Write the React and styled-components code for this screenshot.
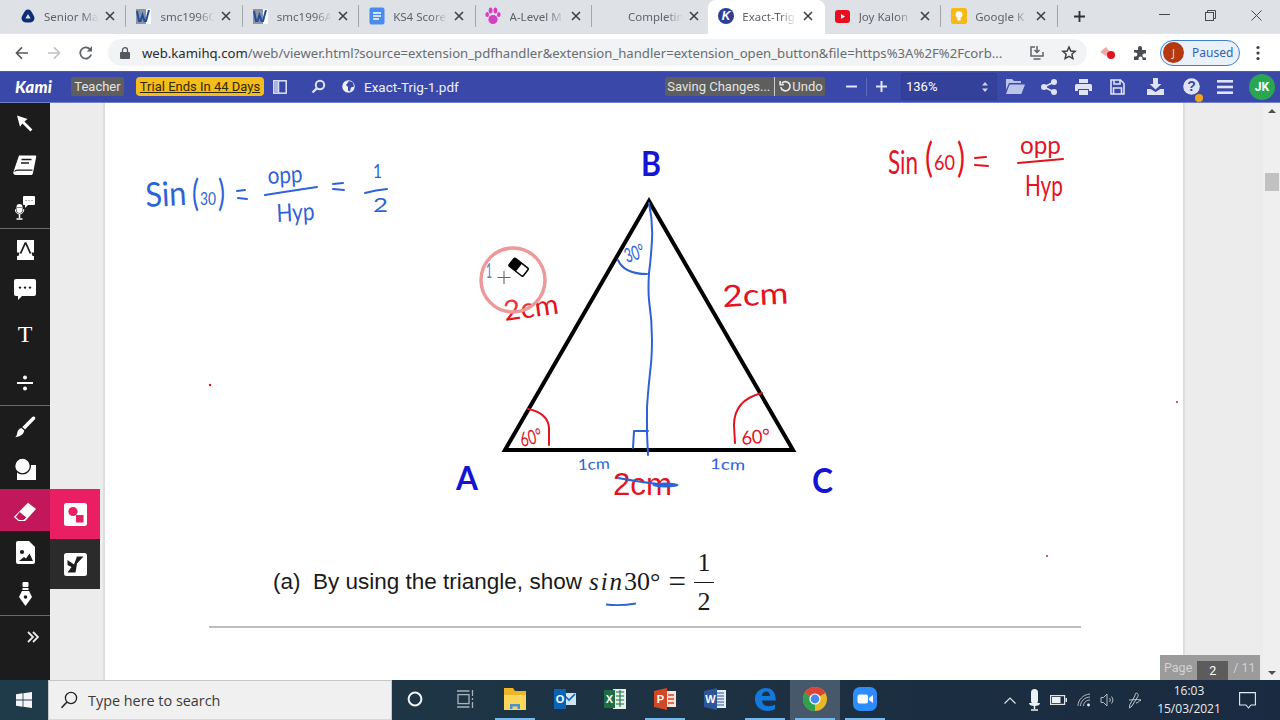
import React from "react";
import styled, { createGlobalStyle } from "styled-components";

const Global = createGlobalStyle`
  html, body { margin: 0; padding: 0; width: 1280px; height: 720px; overflow: hidden; background: #fff; }
  * { box-sizing: border-box; }
  svg { display: block; }
`;

const Screen = styled.div`
  width: 1280px; height: 720px; display: flex; flex-direction: column; overflow: hidden;
  font-family: "Noto Sans", "Open Sans", sans-serif;
`;

/* ---------- tab strip ---------- */
const TabStrip = styled.div`
  height: 34px; flex: none; display: flex; align-items: stretch; background: #dee1e6; padding-left: 10px;
`;
const Tab = styled.div`
  position: relative; width: 116.4px; display: flex; align-items: center; padding-bottom: 2px;
  background: ${p => (p.$active ? "#fff" : "transparent")};
  border-radius: ${p => (p.$active ? "8px 8px 0 0" : "0")};
`;
const TabSep = styled.span`
  width: 1px; height: 22px; background: #a3a6aa; flex: none; margin-left: -1px; align-self: center; margin-bottom: 2px;
`;
const TabIconSlot = styled.span`
  width: ${p => p.$w || 34}px; flex: none; display: flex; justify-content: center; padding-left: 1px;
`;
const TabTitle = styled.span`
  width: 57px; flex: none; font-size: 11.5px; color: #5f6368; white-space: nowrap; overflow: hidden;
  -webkit-mask-image: linear-gradient(90deg, #000 66%, transparent 96%);
  mask-image: linear-gradient(90deg, #000 66%, transparent 96%);
`;
const TabClose = styled.span`
  width: 12px; margin-left: 3px; flex: none; display: flex; justify-content: center;
`;
const NewTab = styled.span`
  width: 46px; display: flex; align-items: center; justify-content: center; padding-bottom: 2px; margin-left: -1px;
`;
const WindowControls = styled.div`
  margin-left: auto; display: flex; align-items: flex-start; padding-top: 4px; padding-right: 1px;
`;
const WinBtn = styled.span`
  width: 46px; height: 22px; display: flex; align-items: center; justify-content: center;
`;

/* ---------- address bar ---------- */
const AddressBar = styled.div`
  height: 37px; flex: none; background: #fff; display: flex; align-items: center; padding-left: 6px;
`;
const NavSlot = styled.span`
  width: ${p => p.$w || 32}px; height: 26px; flex: none; display: flex; align-items: center; justify-content: center;
`;
const Omnibox = styled.div`
  margin-left: 6px; width: 979px; height: 27px; border-radius: 14px; background: #f1f3f4;
  display: flex; align-items: center; padding-left: 9px; padding-right: 2px;
`;
const Url = styled.div`
  margin-left: 9px; width: 870px; font-size: 13.15px; color: #6a6d71; white-space: nowrap; overflow: hidden;
  b { font-weight: 400; color: #2a2c2e; }
`;
const OmniEnd = styled.div`
  margin-left: auto; display: flex;
`;
const ProfilePill = styled.div`
  margin-left: 7px; width: 80px; height: 26px; border-radius: 13px; border: 1px solid #3f7fd0; background: #eaf1fb;
  display: flex; align-items: center; padding-left: 2px; font-size: 12px; color: #2f62b0;
`;
const Avatar = styled.span`
  width: 21px; height: 21px; border-radius: 50%; background: #b5390e; color: #f3d4c8; font-size: 11px;
  display: flex; align-items: center; justify-content: center; margin-right: 8px;
`;

/* ---------- Kami bar ---------- */
const KamiBar = styled.div`
  height: 32px; flex: none; background: #3a49a9; border-top: 1px solid #4a58b4; border-bottom: 1px solid #7280c8;
  display: flex; align-items: center; padding: 0 5px 1px 15px; color: #fff;
`;
const KamiLogo = styled.span`
  width: 41px; font-family: "Lato", sans-serif; font-weight: 900; font-style: italic; font-size: 16.5px; letter-spacing: 0.2px;
`;
const GreyChip = styled.span`
  height: 19px; margin-left: ${p => p.$ml || 0}px; width: ${p => p.$w}px; flex: none; background: #5e5e5e; border-radius: 2px;
  display: flex; align-items: center; justify-content: center; font-size: 13px; color: #e4e4e4; white-space: nowrap;
  font-family: "Roboto", sans-serif;
`;
const TrialChip = styled.span`
  height: 19px; width: 128px; margin-left: 12px; flex: none; background: #f4bd1b; border-radius: 4px; color: #332900;
  display: flex; align-items: center; justify-content: center; font-size: 13px; text-decoration: underline; white-space: nowrap;
  font-family: "Roboto", sans-serif;
`;
const BarSlot = styled.span`
  width: ${p => p.$w}px; margin-left: ${p => p.$ml || 0}px; flex: none; display: flex; align-items: center; justify-content: center; position: relative;
`;
const FileName = styled.span`
  margin-left: 8px; font-size: 13.5px; font-family: "Roboto", sans-serif; color: #eef0fa;
`;
const BarRight = styled.div`
  margin-left: auto; display: flex; align-items: center;
`;
const ChipDivider = styled.span`
  width: 1px; height: 19px; background: #ccc; margin: 0 4px 0 4px;
`;
const BarDivider = styled.span`
  width: 1px; height: 18px; background: #5f6cbc; flex: none; margin: 0 1px;
`;
const ZoomSelect = styled.div`
  width: 96px; height: 27px; margin-left: 7px; background: #33419b; border: 1px solid #2f3c92; border-radius: 2px;
  display: flex; align-items: center; justify-content: space-between; padding: 0 8px 0 4px;
  font-size: 13px; font-family: "Roboto", sans-serif; color: #fff;
`;
const OrangeDot = styled.span`
  position: absolute; right: 2px; bottom: -7px; width: 8px; height: 8px; border-radius: 50%; background: #f7a21b;
`;
const UserBadge = styled.span`
  width: 26px; height: 26px; margin-left: 4px; border-radius: 50%; background: #2aa651; color: #fff; font-size: 12px; font-weight: 700;
  display: flex; align-items: center; justify-content: center; font-family: "Roboto", sans-serif;
`;

/* ---------- workspace ---------- */
const Workspace = styled.div`
  flex: 1; min-height: 0; display: flex; position: relative;
`;
const Sidebar = styled.nav`
  width: 50px; flex: none; background: #1c1c1c; display: flex; flex-direction: column;
`;
const SideBtn = styled.div`
  height: ${p => p.$h || 42}px; flex: none; display: flex; align-items: center; justify-content: center;
  background: ${p => (p.$active ? "#c2175b" : "transparent")};
  padding-left: ${p => p.$pl || 0}px;
  padding-top: ${p => p.$pt || 0}px;
`;
const SideRule = styled.div`
  height: 1px; flex: none; background: #6a6a6a;
`;
const Flyout = styled.div`
  position: absolute; left: 50px; top: 386px; width: 50px; display: flex; flex-direction: column;
`;
const FlyoutBtn = styled.div`
  height: 50px; display: flex; align-items: center; justify-content: center;
  background: ${p => (p.$active ? "#e91e63" : "#2b2b2b")};
`;
const Gutter = styled.div`
  width: ${p => p.$w}px; flex: none; background: #ececec;
  border-${p => p.$side}: 2px solid #dedede;
`;
const Scrollbar = styled.div`
  width: 17px; flex: none; background: #efefef; display: flex; flex-direction: column; align-items: center;
`;
const ScrollArrowUp = styled.div`
  margin-top: 6px; width: 0; height: 0;
  border-left: 4px solid transparent; border-right: 4px solid transparent; border-bottom: 4px solid #505050;
`;
const ScrollThumb = styled.div`
  width: 14px; height: 18px; background: #c1c1c1; margin-top: 60px;
`;
const ScrollArrow = styled.div`
  margin-top: auto; margin-bottom: 5px; width: 0; height: 0;
  border-left: 4px solid transparent; border-right: 4px solid transparent; border-top: 4px solid #505050;
`;
const Page = styled.main`
  width: 1078px; flex: none; background: #fff; display: flex; flex-direction: column; overflow: hidden;
`;
const Figure = styled.svg`
  width: 1078px; height: 437px; flex: none;
`;
const Question = styled.div`
  height: 86px; flex: none; padding: 0 0 3px 168px; display: flex; align-items: center; color: #1a1a1a; position: relative;
`;
const Prompt = styled.span`
  font-family: "Liberation Sans", Arial, sans-serif; font-size: 22.5px; white-space: pre;
`;
const MathVar = styled.span`
  font-family: "Liberation Serif", serif; font-style: italic; font-size: 25px; letter-spacing: 2px; margin-left: 7px;
`;
const MathNum = styled.span`
  font-family: "Liberation Serif", serif; font-size: 26px; white-space: pre;
`;
const MathEq = styled.span`
  font-family: "Liberation Serif", serif; font-size: 31px; margin-left: 8px; line-height: 1;
`;
const Fraction = styled.span`
  display: inline-flex; flex-direction: column; align-items: center; margin-left: 8px; width: 20px;
  font-family: "Liberation Serif", serif; font-size: 26px; line-height: 31px;
`;
const FractionTop = styled.span`
  border-bottom: 1.5px solid #1a1a1a; width: 100%; text-align: center; padding-bottom: 4px;
`;
const FractionBottom = styled.span`
  padding-top: 3px;
`;
const InkUnderline = styled.svg`
  position: absolute; left: 500px; top: 61px;
`;
const StrayDot = styled.span`
  position: absolute; left: 941px; top: 15px; width: 2px; height: 2px; border-radius: 50%; background: #e3131f;
`;
const PageRule = styled.hr`
  margin: 0 0 0 104px; width: 872px; height: 2px; flex: none; border: none; background: #bdbdbd;
`;
const PageBadge = styled.div`
  position: absolute; left: 1160px; top: 552px; width: 100px; height: 25px; background: #9b9b9b;
  display: flex; align-items: center; padding-left: 4px; font-family: "Roboto", sans-serif; font-size: 12.5px; color: #d2d2d2;
`;
const PageInput = styled.span`
  width: 31px; height: 19px; margin: 0 5px 0 5px; align-self: flex-end; background: #5c5c5c; color: #fff; display: flex; align-items: center; justify-content: center;
`;

/* ---------- taskbar ---------- */
const Taskbar = styled.footer`
  height: 40px; flex: none; display: flex; align-items: stretch; padding-right: 10px;
  background: linear-gradient(90deg, #1f3b4a 0%, #1d3343 45%, #1a2a40 100%);
`;
const StartBtn = styled.div`
  width: 48px; flex: none; display: flex; align-items: center; justify-content: center;
`;
const SearchBox = styled.div`
  width: 344px; flex: none; background: #f0f0f0; border: 1px solid #c8c8c8; border-bottom-color: #d8d8d8;
  display: flex; align-items: center; padding-left: 11px; font-size: 15px; color: #333; margin-right: -2px;
`;
const SearchText = styled.span`
  margin-left: 10px; font-family: "Open Sans", sans-serif; font-size: 14.4px; color: #3a3a3a;
`;
const TaskSlot = styled.div`
  width: 50px; flex: none; position: relative; display: flex; align-items: center; justify-content: center;
  padding-bottom: 2px;
  background: ${p => (p.$focus ? "#46586a" : "transparent")};
  &::after {
    content: ""; position: absolute; left: 5px; right: 5px; bottom: 0; height: 2px;
    background: ${p => (p.$on ? "#76b9ed" : "transparent")};
  }
`;
const TraySlot = styled.div`
  width: ${p => p.$w}px; flex: none; display: flex; align-items: center; justify-content: center;
`;
const Clock = styled.div`
  width: 70px; flex: none; display: flex; flex-direction: column; align-items: center; justify-content: center; gap: 2px;
  font-family: "Open Sans", sans-serif; font-size: 12px; line-height: 16px; color: #e8ecef;
`;

/* ---------- icons ---------- */
const Svg = ({ s = 16, h, vb, children, ...r }) => (
  <svg width={s} height={h || s} viewBox={vb || "0 0 24 24"} {...r}>{children}</svg>
);
const CloseX = ({ c = "#3c4043" }) => (
  <Svg s={10} vb="0 0 10 10"><path d="M1 1l8 8M9 1l-8 8" stroke={c} strokeWidth="1.6" /></Svg>
);
const DriveIcon = () => (
  <Svg s={14} vb="0 0 14 14"><path d="M7 .5C9.5.5 10 2 11 3.6l2 3.6c.7 1.4.6 3-.4 4.6-1 1.3-2 1.7-3.6 1.7H5c-1.6 0-2.7-.4-3.6-1.7-1-1.6-1.1-3.2-.4-4.6l2-3.6C4 2 4.5.5 7 .5z" fill="#0d2f7a"/><path d="M7 5l2.6 4.6H4.4z" fill="#dee1e6"/></Svg>
);
const WordIcon = () => (
  <Svg s={17} vb="0 0 17 17"><rect x="1" y="1" width="12" height="15" fill="#8b93a6"/><rect x="11" y="1" width="5" height="15" fill="#fff"/><path d="M2 3l2 10h1.5L7.5 7l2 6H11l3-11" fill="none" stroke="#1f4e9a" strokeWidth="2"/></Svg>
);
const DocsIcon = () => (
  <Svg s={16} h={18} vb="0 0 16 18"><rect x=".5" y=".5" width="15" height="17" rx="2" fill="#4a8bf0"/><path d="M4 6h8M4 9h8M4 12h6" stroke="#fff" strokeWidth="1.5"/></Svg>
);
const PawIcon = () => (
  <Svg s={16} h={18} vb="0 0 16 18" fill="#d63fc0"><ellipse cx="8" cy="12.5" rx="4.6" ry="4.5"/><ellipse cx="2.2" cy="7.5" rx="1.8" ry="2.6"/><ellipse cx="13.8" cy="7.5" rx="1.8" ry="2.6"/><ellipse cx="5.6" cy="3.6" rx="1.9" ry="3"/><ellipse cx="10.4" cy="3.6" rx="1.9" ry="3"/></Svg>
);
const KamiTab = () => (
  <Svg s={16} vb="0 0 16 16"><circle cx="8" cy="8" r="8" fill="#2e3d96"/><text x="8" y="12.2" textAnchor="middle" fontSize="12" fontWeight="700" fontStyle="italic" fill="#fff" fontFamily="Liberation Sans">K</text></Svg>
);
const YouTube = () => (
  <Svg s={15} h={13} vb="0 0 15 13"><rect width="15" height="13" rx="3" fill="#e5101f"/><path d="M6 4l4 2.5L6 9z" fill="#fff"/></Svg>
);
const KeepIcon = () => (
  <Svg s={16} vb="0 0 16 16"><rect width="16" height="16" rx="2" fill="#f7ba15"/><circle cx="8" cy="6.6" r="3.4" fill="#fff"/><rect x="6.3" y="10" width="3.4" height="2.6" fill="#fff"/></Svg>
);

const ArrowBack = () => (
  <Svg s={16} vb="0 0 16 16"><path d="M14 8H2.5M8 2.4L2.4 8 8 13.6" fill="none" stroke="#55585c" strokeWidth="1.6" /></Svg>
);
const ArrowForward = () => (
  <Svg s={16} vb="0 0 16 16"><path d="M2 8h11.500M8 2.400L13.600 8 8 13.600" fill="none" stroke="#c0c3c6" strokeWidth="1.6" /></Svg>
);
const Reload = () => (
  <Svg s={16} vb="0 0 16 16"><path d="M13.2 9.6A5.6 5.6 0 1 1 12 4.2" fill="none" stroke="#5f6368" strokeWidth="1.7"/><path d="M14 1v5.4H8.8z" fill="#5f6368"/></Svg>
);
const Lock = () => (
  <Svg s={10} h={12} vb="0 0 10 12"><rect y="5" width="10" height="7" rx="1" fill="#55585c"/><path d="M2.5 5V3.2a2.5 2.5 0 0 1 5 0V5" fill="none" stroke="#55585c" strokeWidth="1.3"/></Svg>
);
const InstallIcon = () => (
  <Svg s={16} vb="0 0 16 16" fill="none" stroke="#5f6368" strokeWidth="1.5"><path d="M6 2H2v9h12V7M4.5 14h7M8 1v6M5.5 5L8 7.5 10.5 5"/></Svg>
);
const StarIcon = () => (
  <Svg s={16} vb="0 0 24 24"><path d="M12 3l2.7 6 6.5.6-4.9 4.3 1.5 6.4L12 17l-5.8 3.3 1.5-6.4-4.9-4.3 6.5-.6z" fill="none" stroke="#3c4043" strokeWidth="2.2"/></Svg>
);
const RecIcon = () => (
  <Svg s={18} vb="0 0 18 18"><path d="M1 8l6-5 4 5-4 4z" fill="#f0a7a7"/><circle cx="12" cy="11" r="4" fill="#e31320"/></Svg>
);
const Puzzle = () => (
  <Svg s={16} vb="0 0 16 16"><path d="M1 5h4V3a2 2 0 0 1 4 0v2h4v3.4h-1.6a2 2 0 0 0 0 4H13V15H9.5v-1.4a2 2 0 0 0-4 0V15H1v-3.6h1.4a2 2 0 0 0 0-4H1z" fill="#4a4d50"/></Svg>
);
const Kebab = () => (
  <Svg s={4} h={16} vb="0 0 4 16" fill="#3c4043"><circle cx="2" cy="2.5" r="1.6"/><circle cx="2" cy="8" r="1.6"/><circle cx="2" cy="13.5" r="1.6"/></Svg>
);

const wh = "#fff";
const PanelIcon = () => (
  <Svg s={14} vb="0 0 14 14" fill="none" stroke="#dfe3f6" strokeWidth="1.5"><rect x=".8" y=".8" width="12.4" height="12.4"/><path d="M5.5 1v12"/><rect x="1.5" y="1.5" width="3.6" height="11" fill="#aeb7e4" stroke="none"/></Svg>
);
const LoupeIcon = () => (
  <Svg s={15} vb="0 0 15 15" fill="none" stroke="#dfe3f6" strokeWidth="2"><circle cx="9" cy="6" r="4.2"/><path d="M6 9.2L1.5 13.5" strokeWidth="2.4"/></Svg>
);
const GlobeIcon = () => (
  <Svg s={13} vb="0 0 13 13"><circle cx="6.5" cy="6.5" r="6.2" fill="#eef0fa"/><path d="M7 1l4 1.5 1 4-3 1-1 4-2-1V7L4 5z" fill="#3a49a9"/></Svg>
);
const UndoIcon = () => (
  <Svg s={13} vb="0 0 14 14" fill="none" stroke="#e8e8e8" strokeWidth="1.8"><path d="M3.2 3.4A5 5 0 1 1 2 7.6"/><path d="M1.2 1v4h4" /></Svg>
);
const MinusBar = () => <Svg s={11} h={3} vb="0 0 11 3"><rect y=".5" width="11" height="2" fill="#dfe3f6"/></Svg>;
const PlusBar = () => <Svg s={11} vb="0 0 11 11"><path d="M5.5 0v11M0 5.5h11" stroke="#dfe3f6" strokeWidth="2"/></Svg>;
const Updown = () => <Svg s={6} h={10} vb="0 0 6 10" fill="#cfd4ef"><path d="M3 0l3 3.6H0zM3 10L0 6.4h6z"/></Svg>;
const FolderIcon = () => (
  <Svg s={20} h={16} vb="0 0 20 16" fill="#bcc4ea"><path d="M1 0h6l2 2h7v2H4L1 11z"/><path d="M4.6 5.4H20L16.4 15H1z"/></Svg>
);
const ShareIcon = () => (
  <Svg s={16} vb="0 0 16 16" fill="#dfe3f6"><circle cx="3" cy="8" r="3"/><circle cx="13" cy="3" r="3"/><circle cx="13" cy="13" r="3"/><path d="M3 8l10-5M3 8l10 5" stroke="#dfe3f6" strokeWidth="1.8"/></Svg>
);
const PrintIcon = () => (
  <Svg s={17} h={16} vb="0 0 17 16"><path d="M4 0h9v4H4z" fill="#dfe3f6"/><path d="M1.5 5h14A1.5 1.5 0 0 1 17 6.5V12h-3v-2H3v2H0V6.5A1.5 1.5 0 0 1 1.5 5z" fill="#dfe3f6"/><rect x="4" y="11" width="9" height="5" fill="#dfe3f6"/></Svg>
);
const SaveIcon = () => (
  <Svg s={15} h={16} vb="0 0 15 16" fill="none" stroke="#dfe3f6" strokeWidth="1.6"><path d="M1 1h9.5L14 4.5V15H1z"/><path d="M4 1v4h6V1M3.5 15V9h8v6"/></Svg>
);
const DownloadIcon = () => (
  <Svg s={17} vb="0 0 17 17" fill="#dfe3f6"><path d="M6 0h5v6h3.4L8.5 11.6 2.6 6H6z"/><path d="M0 11h3.6l4.9 3 4.9-3H17v6H0z"/></Svg>
);
const HelpIcon = () => (
  <Svg s={17} vb="0 0 17 17"><circle cx="8.5" cy="8.5" r="8.3" fill="#dfe3f6"/><text x="8.5" y="13.4" textAnchor="middle" fontSize="14" fontWeight="700" fill="#3a49a9" fontFamily="Liberation Sans">?</text></Svg>
);
const BarsIcon = () => (
  <Svg s={16} h={14} vb="0 0 16 14" fill="#dfe3f6"><rect width="16" height="2.6"/><rect y="5.7" width="16" height="2.6"/><rect y="11.4" width="16" height="2.6"/></Svg>
);

/* sidebar */
const CursorIcon = () => (
  <Svg s={18} vb="0 0 18 18" fill={wh}><path d="M1 .5L11.5 4 8.4 6.6l8 8-2 2-8-8L4 11.8z"/></Svg>
);
const BookIcon = () => (
  <Svg s={24} h={22} vb="0 0 24 22"><path d="M6 .5h16c1 0 1.5.6 1.2 1.6L20 18c-.3 1.4-1 2-2.3 2H3c-2 0-3-1-2.6-3z" fill={wh}/><path d="M8.5 4.5h10M8 8h8" stroke="#1c1c1c" strokeWidth="1.6"/><path d="M1.5 16.5c.8-1 1.6-1.3 3-1.3h15" stroke="#1c1c1c" strokeWidth="1.2" fill="none"/></Svg>
);
const MicBubble = () => (
  <Svg s={20} h={24} vb="0 0 20 24"><rect x="8" y="0" width="12" height="9" rx="1" fill={wh}/><path d="M10 9v3l3-3z" fill={wh}/><path d="M10.5 4.5h1M13.5 4.5h1M16.5 4.5h1" stroke="#555" strokeWidth="1"/><rect x="1.5" y="8" width="6" height="9" rx="3" fill={wh}/><path d="M1.5 11.5h6" stroke="#888" strokeWidth="1"/><path d="M.2 13c0 3 1.6 5 4.3 5s4.3-2 4.3-5" fill="none" stroke={wh} strokeWidth="1"/><path d="M4.5 18v4M1.5 23h6" stroke={wh} strokeWidth="1.5"/></Svg>
);
const HighlightA = () => (
  <Svg s={17} h={20} vb="0 0 17 20"><rect width="17" height="20" fill={wh}/><path d="M8.500 2.500L3.500 13.500M8.500 2.500L13.500 13.500" stroke="#1c1c1c" strokeWidth="1.800" fill="none"/><path d="M0 12.500L2.500 12.500L1.500 16H0zM17 12.500H14.500L15.500 16H17z" fill="#1c1c1c"/></Svg>
);
const CommentIcon = () => (
  <Svg s={22} h={21} vb="0 0 22 21"><path d="M2 0h18a2 2 0 0 1 2 2v13a2 2 0 0 1-2 2H8l-4 4v-4H2a2 2 0 0 1-2-2V2a2 2 0 0 1 2-2z" fill={wh}/><circle cx="6" cy="8.6" r="1.2" fill="#1c1c1c"/><circle cx="11" cy="8.6" r="1.2" fill="#1c1c1c"/><circle cx="16" cy="8.6" r="1.2" fill="#1c1c1c"/></Svg>
);
const TextTool = styled.span`
  font-family: "Liberation Serif", serif; font-size: 24px; color: #fff; line-height: 1;
`;
const DivideIcon = () => (
  <Svg s={16} vb="0 0 16 16" fill={wh}><circle cx="8" cy="2.4" r="2"/><rect y="7" width="16" height="2"/><circle cx="8" cy="13.6" r="2"/></Svg>
);
const BrushIcon = () => (
  <Svg s={22} vb="0 0 22 22" fill={wh}><path d="M20.5 .8c1 .6 1 1.8.2 2.7L11 13.5 8.3 11 18 1.2c.7-.7 1.6-1 2.5-.4z"/><path d="M7.4 12l2.8 2.6c-.3 3-2.8 6-9 6.6 2.4-2 1.6-4 2.6-6.2.7-1.6 2-2.6 3.6-3z"/></Svg>
);
const ShapeIcon = () => (
  <Svg s={22} h={22} vb="0 0 22 22"><rect x="3" y="7" width="19" height="15" fill={wh}/><circle cx="8.5" cy="8" r="8.6" fill="#1c1c1c"/><circle cx="8.5" cy="8" r="7.2" fill={wh}/></Svg>
);
const EraserIcon = () => (
  <Svg s={24} h={20} vb="0 0 24 20"><path d="M15 .8l8 6.2-10.8 12H5.5L.8 15z" fill={wh}/><path d="M6.6 10l6.8 5.4-3 2.6H6L2.8 15z" fill="#c2175b"/></Svg>
);
const ImageFile = () => (
  <Svg s={19} h={23} vb="0 0 19 23"><path d="M2 0h11l6 6v15a2 2 0 0 1-2 2H2a2 2 0 0 1-2-2V2a2 2 0 0 1 2-2z" fill={wh}/><circle cx="6" cy="11" r="2.1" fill="#1c1c1c"/><path d="M3 20l5-4 2 1.5 3.5-5L17 20z" fill="#1c1c1c"/></Svg>
);
const PenNib = () => (
  <Svg s={13} h={24} vb="0 0 13 24"><rect x="3.5" y="0" width="6" height="5" rx="1" fill={wh}/><rect x="3.5" y="6" width="6" height="2" fill={wh}/><path d="M3 9h7l3 6-6.5 9L0 15z" fill={wh}/><circle cx="6.5" cy="15" r="1.8" fill="#1c1c1c"/></Svg>
);
const Chevrons = () => (
  <Svg s={12} h={12} vb="0 0 12 12" fill="none" stroke="#e8e8e8" strokeWidth="1.8"><path d="M1 1l5 5-5 5M6 1l5 5-5 5"/></Svg>
);
const FlyShape = () => (
  <Svg s={23} vb="0 0 23 23"><rect width="23" height="23" rx="2.5" fill={wh}/><circle cx="9" cy="8.5" r="4.6" fill="#e91e63"/><rect x="12" y="12" width="7.5" height="7.5" fill="#e91e63"/></Svg>
);
const FlyFree = () => (
  <Svg s={23} vb="0 0 23 23"><rect width="23" height="23" rx="2.5" fill={wh}/><path d="M3.500 7l6.500 4.500L13 3.500h6.500L13 10.500 11.500 19.500H3.500l4-5.500-4-2z" fill="#1c1c1c"/></Svg>
);

/* taskbar */
const WinLogo = () => (
  <Svg s={16} vb="0 0 16 16" fill="#f4f6f7"><path d="M0 2.2L6.6 1.3V7.6H0zM7.4 1.2L16 0v7.6H7.4zM0 8.4h6.6v6.3L0 13.8zM7.4 8.4H16V16l-8.6-1.2z"/></Svg>
);
const SearchGlass = () => (
  <Svg s={18} vb="0 0 18 18" fill="none" stroke="#222" strokeWidth="1.3"><circle cx="11" cy="7" r="5.6"/><path d="M7 11L1.5 16.8" strokeWidth="1.6"/></Svg>
);
const Cortana = () => (
  <Svg s={16} vb="0 0 16 16"><circle cx="8" cy="8" r="6.4" fill="none" stroke="#f2f4f5" strokeWidth="2"/></Svg>
);
const TaskView = () => (
  <Svg s={17} h={18} vb="0 0 17 18" fill="none" stroke="#aab2b8" strokeWidth="1.3"><rect x="1" y="4.6" width="11" height="9"/><path d="M0 1h12.5M0 17h12.5"/><path d="M15.5 0v6M15.5 8v2M15.5 12v6"/></Svg>
);
const Explorer = () => (
  <Svg s={22} h={22} vb="0 0 22 22"><path d="M0 0h9l2 3h11v19H0z" fill="#f0b429"/><path d="M0 7h22v15H0z" fill="#fbd75b"/><path d="M6 21v-5h10v5h-2.5v-2.5h-5V21z" fill="#4a92c8"/></Svg>
);
const Outlook = () => (
  <Svg s={22} vb="0 0 22 22"><rect x="9" y="5" width="13" height="12" fill="#cfe4f7"/><path d="M10 7l5 5 6-6" stroke="#0a64b4" strokeWidth="1.6" fill="none"/><rect y="1" width="12" height="20" fill="#0a64b4"/><text x="6" y="15" textAnchor="middle" fontSize="11" fontWeight="700" fill="#fff" fontFamily="Liberation Sans">O</text></Svg>
);
const Excel = () => (
  <Svg s={22} vb="0 0 22 22"><rect x="9" y="1" width="13" height="20" fill="#e4f0e8"/><path d="M12 4h8M12 8h8M12 12h8M12 16h8M16 2v17" stroke="#1d6f42" strokeWidth="1.1"/><rect y="2" width="11" height="18" fill="#1d6f42"/><text x="5.5" y="15" textAnchor="middle" fontSize="11" fontWeight="700" fill="#fff" fontFamily="Liberation Sans">X</text></Svg>
);
const PowerPoint = () => (
  <Svg s={22} vb="0 0 22 22"><rect x="9" y="3" width="13" height="16" fill="#fbe3d9"/><path d="M14 7h6M14 11h6M14 15h6" stroke="#d24726" strokeWidth="1.6"/><path d="M0 3l13-3v22L0 19z" fill="#d24726"/><text x="6.5" y="15" textAnchor="middle" fontSize="11" fontWeight="700" fill="#fff" fontFamily="Liberation Sans">P</text></Svg>
);
const WordTask = () => (
  <Svg s={22} vb="0 0 22 22"><rect x="9" y="2" width="13" height="18" fill="#e6ecf6"/><path d="M13 5h7M13 8h7M13 11h7M13 14h7M13 17h7" stroke="#2b579a" strokeWidth="1.2"/><path d="M0 3l13-3v22L0 19z" fill="#2b579a"/><text x="6.5" y="15" textAnchor="middle" fontSize="11" fontWeight="700" fill="#fff" fontFamily="Liberation Sans">W</text></Svg>
);
const Edge = () => (
  <Svg s={24} vb="0 0 24 24"><path d="M2 12C2 5 7 1 13 1c6 0 9.800 4.500 9.800 12.500H9c.3 4 3 5.700 6.500 5.700 2.600 0 4.800-.6 6.500-1.700v4.600c-2 1.200-4.600 1.900-7.600 1.900C7.500 24 2 19.400 2 12zm7-3h8c0-3-1.500-4.500-3.800-4.500S9.300 6 9 9z" fill="#1479dd"/></Svg>
);
const Chrome = () => (
  <Svg s={24} vb="0 0 24 24"><circle cx="12" cy="12" r="12" fill="#e8b923"/><path d="M12 12L1.600 6A12 12 0 0 1 22.400 6z" fill="#dc4437"/><path d="M12 12L1.600 6A12 12 0 0 0 12 24z" fill="#2fa14c"/><circle cx="12" cy="12" r="5.600" fill="#fff"/><circle cx="12" cy="12" r="4.400" fill="#4a88ee"/></Svg>
);
const Zoom = () => (
  <Svg s={24} vb="0 0 24 24"><rect width="24" height="24" rx="7" fill="#2d8cff"/><rect x="4.500" y="7.500" width="10.500" height="9" rx="2" fill="#fff"/><path d="M16 11l4-3v8l-4-3z" fill="#fff"/></Svg>
);
const Caret = () => <Svg s={12} h={7} vb="0 0 12 7" fill="none" stroke="#e0e4e7" strokeWidth="1.2"><path d="M.5 6.500L6 1l5.500 5.500"/></Svg>;
const TrayMic = () => (
  <Svg s={11} h={22} vb="0 0 11 22"><rect x="2" y="0" width="7" height="15" rx="3.500" fill="#eef1f3"/><path d="M0 14c0 2 2 3 5.500 3S11 16 11 14" fill="#eef1f3"/><path d="M5.500 17v3M2 21h7" stroke="#eef1f3" strokeWidth="1.500"/></Svg>
);
const Battery = () => (
  <Svg s={17} h={10} vb="0 0 17 10"><rect x=".6" y=".6" width="14" height="8.800" fill="none" stroke="#dfe3e6" strokeWidth="1.200"/><rect x="2" y="2" width="8.500" height="6" fill="#eef1f3"/><rect x="15.500" y="3" width="1.500" height="4" fill="#dfe3e6"/></Svg>
);
const WifiTray = () => (
  <Svg s={14} vb="0 0 14 14" fill="none" stroke="#c4cad0" strokeWidth=".9"><path d="M1 13C1 7 6 1.500 13 1M3.500 13c0-4.500 4-8.800 9.500-9M6.500 13c0-3 2.500-6 6.500-6"/><circle cx="11.500" cy="12" r="1.400" fill="#eef1f3" stroke="none"/></Svg>
);
const Speaker = () => (
  <Svg s={15} h={14} vb="0 0 15 14" fill="none" stroke="#c4cad0" strokeWidth=".9"><path d="M1 4.500h2.500L7 1v12L3.500 9.500H1zM9.500 5c1 1 1 3 0 4M11.500 3.500c1.800 1.800 1.800 5.200 0 7"/></Svg>
);
const PenTray = () => (
  <Svg s={14} h={17} vb="0 0 14 17" fill="none" stroke="#c4cad0" strokeWidth="1"><path d="M8 1c2 0 3 2 1.500 4L4 14l-2.500 2 .3-3.300L6.800 4C7.300 2.800 7 1.800 8 1zM1 8c3 0 7-1 12 0-2 1-3 3-5 3"/></Svg>
);
const Notify = () => (
  <Svg s={17} h={17} vb="0 0 17 17" fill="none" stroke="#e6eaec" strokeWidth="1.100"><path d="M.6.6h15.800v12.400H12L9.500 16l-2.500-3H.6z"/></Svg>
);

/* ---------- the annotated figure, in screen coordinates ---------- */
const blueInk = "#2e63d6";
const deepBlue = "#1414d6";
const redInk = "#e3131f";

const measureCtx = typeof document !== "undefined" ? document.createElement("canvas").getContext("2d") : null;
const naturalWidth = (text, size, weight) => {
  if (!measureCtx) return 0;
  measureCtx.font = `${weight} ${size}px Lato, sans-serif`;
  return measureCtx.measureText(text).width;
};

/* handwriting: real text, squeezed or stretched to the width of the ink */
const Ink = ({ x, y, w, size, fill, rot = 0, children, weight = 400 }) => {
  const nat = naturalWidth(children, size, weight);
  const sx = nat ? w / nat : 1;
  return (
    <text
      transform={`translate(${x} ${y}) rotate(${rot}) scale(${sx} 1)`}
      fontSize={size} fill={fill} fontFamily="Lato, sans-serif" fontWeight={weight}
    >{children}</text>
  );
};
const Stroke = ({ d, c, w = 2 }) => (
  <path d={d} fill="none" stroke={c} strokeWidth={w} strokeLinecap="round" strokeLinejoin="round" />
);

const Diagram = () => (
  <Figure viewBox="105 103 1078 437">
    {/* left formula */}
    <Ink x={146} y={207} w={41} size={34} fill={blueInk} rot={-3}>Sin</Ink>
    <Ink x={192} y={206} w={7} size={36} fill={blueInk}>(</Ink>
    <Ink x={200} y={205} w={16} size={18} fill={blueInk}>30</Ink>
    <Ink x={218} y={206} w={7} size={36} fill={blueInk}>)</Ink>
    <Stroke d="M237 191l8-1M238 198l9 1" c={blueInk} />
    <Ink x={268} y={184} w={35} size={24} fill={blueInk} rot={-3}>opp</Ink>
    <Stroke d="M265 195Q290 191 317 187" c={blueInk} />
    <Ink x={277} y={222} w={38} size={25} fill={blueInk} rot={-3}>Hyp</Ink>
    <Stroke d="M333 184l10-1M333 189l11 1" c={blueInk} />
    <Ink x={373} y={178} w={9} size={20} fill={blueInk}>1</Ink>
    <Stroke d="M365 193Q376 190 387 189" c={blueInk} />
    <Ink x={373} y={212} w={15} size={20} fill={blueInk}>2</Ink>

    {/* right formula */}
    <Ink x={888} y={174} w={30} size={32} fill={redInk}>Sin</Ink>
    <Ink x={925} y={172} w={8} size={40} fill={redInk}>(</Ink>
    <Ink x={934} y={170} w={21} size={22} fill={redInk}>60</Ink>
    <Ink x={957} y={172} w={8} size={40} fill={redInk}>)</Ink>
    <Stroke d="M975 158l11-1M975 165l13 1" c={redInk} />
    <Ink x={1020} y={154} w={41} size={25} fill={redInk}>opp</Ink>
    <Stroke d="M1018 163Q1040 161 1063 159" c={redInk} />
    <Ink x={1025} y={196} w={38} size={28} fill={redInk}>Hyp</Ink>

    {/* labels */}
    <Ink x={641} y={176} w={20} size={35} fill={deepBlue} weight={700}>B</Ink>
    <Ink x={456} y={490} w={22} size={32} fill={deepBlue} weight={700}>A</Ink>
    <Ink x={812} y={493} w={21} size={34} fill={deepBlue} weight={700}>C</Ink>

    {/* triangle */}
    <path d="M505 450L649 201L793 450Z" fill="none" stroke="#000" strokeWidth="4" strokeLinejoin="miter" />

    {/* altitude and right angle */}
    <Stroke d="M649 203Q653 222 652 240Q651 258 649 273Q648 288 649 300Q652 320 652 340Q652 358 650 373Q648 392 647 407L647 433L648 455" c={blueInk} />
    <Stroke d="M633 448L634 431L648 431" c={blueInk} />
    <Stroke d="M618 260Q624 274 647 274" c={blueInk} />
    <Ink x={627} y={263} w={20} size={20} fill={blueInk} rot={-18}>30°</Ink>

    {/* red angles */}
    <Stroke d="M528 409Q548 413 549 428L549 445" c={redInk} />
    <Ink x={522} y={447} w={22} size={20} fill={redInk} rot={-14}>60°</Ink>
    <Stroke d="M762 393Q734 400 734 425L735 443" c={redInk} />
    <Ink x={742} y={445} w={29} size={19} fill={redInk} rot={-6}>60°</Ink>

    {/* side lengths */}
    <Ink x={723} y={307} w={66} size={30} fill={redInk} rot={-3}>2cm</Ink>
    <Ink x={505} y={321} w={55} size={28} fill={redInk} rot={-8}>2cm</Ink>
    <Ink x={578} y={470} w={32} size={15} fill={blueInk} rot={-2}>1cm</Ink>
    <Ink x={710} y={469} w={35} size={15} fill={blueInk} rot={2}>1cm</Ink>

    <text x={613} y={495} fontSize="32" fill={redInk} textLength={59} lengthAdjust="spacingAndGlyphs" fontFamily="Liberation Sans">2cm</text>
    <Stroke d="M618 478Q640 482 658 484" c={blueInk} />
    <ellipse cx="665.500" cy="485" rx="13" ry="2.600" fill={blueInk} />

    {/* stray marks */}
    <circle cx="210" cy="385" r="1.200" fill={redInk} />
    <circle cx="1177" cy="402" r="1" fill={redInk} />

    {/* eraser cursor */}
    <Ink x={486} y={278} w={6} size={21} fill={blueInk}>1</Ink>
    <circle cx="513" cy="280" r="32" fill="rgba(255,255,255,0.15)" stroke="#ee9999" strokeWidth="3.500" />
    <g transform="rotate(38 518.500 266.500)">
      <rect x="510" y="262" width="18" height="10" rx="1.500" fill="#fff" stroke="#000" strokeWidth="1.500" />
      <rect x="510" y="262" width="9.500" height="10" rx="1.500" fill="#000" />
    </g>
    <path d="M504 271v13M497.500 277.500h13" stroke="#666" strokeWidth="1.100" />
  </Figure>
);

const tabs = [
  { icon: <DriveIcon />, title: "Senior Ma" },
  { icon: <WordIcon />, title: "smc1996C" },
  { icon: <WordIcon />, title: "smc1996A" },
  { icon: <DocsIcon />, title: "KS4 Score" },
  { icon: <PawIcon />, title: "A-Level M" },
  { icon: null, title: "Completin" },
];

export default function App() {
  return (
    <Screen>
      <Global />
      <TabStrip>
        {tabs.map((t, i) => (
          <React.Fragment key={i}>
            <Tab>
              <TabIconSlot $w={t.icon ? 34 : 36}>{t.icon}</TabIconSlot>
              <TabTitle>{t.title}</TabTitle>
              <TabClose><CloseX /></TabClose>
            </Tab>
            {i < 5 && <TabSep />}
          </React.Fragment>
        ))}
        <Tab $active>
          <TabIconSlot><KamiTab /></TabIconSlot>
          <TabTitle>Exact-Trig</TabTitle>
          <TabClose><CloseX /></TabClose>
        </Tab>
        <Tab>
          <TabIconSlot><YouTube /></TabIconSlot>
          <TabTitle>Joy Kalon</TabTitle>
          <TabClose><CloseX /></TabClose>
        </Tab>
        <TabSep />
        <Tab>
          <TabIconSlot><KeepIcon /></TabIconSlot>
          <TabTitle>Google K</TabTitle>
          <TabClose><CloseX /></TabClose>
        </Tab>
        <TabSep />
        <NewTab>
          <Svg s={13} vb="0 0 13 13"><path d="M6.500 1v11M1 6.500h11" stroke="#303134" strokeWidth="1.800" /></Svg>
        </NewTab>
        <WindowControls>
          <WinBtn><Svg s={11} h={2} vb="0 0 11 2"><rect width="11" height="1" fill="#4a4a4a" /></Svg></WinBtn>
          <WinBtn><Svg s={11} vb="0 0 11 11" fill="none" stroke="#4a4a4a"><rect x=".5" y="2.500" width="8" height="8" /><path d="M2.500 2.500v-2h8v8h-2" /></Svg></WinBtn>
          <WinBtn><Svg s={11} vb="0 0 11 11"><path d="M.5.500l10 10M10.500.500l-10 10" stroke="#4a4a4a" /></Svg></WinBtn>
        </WindowControls>
      </TabStrip>

      <AddressBar>
        <NavSlot><ArrowBack /></NavSlot>
        <NavSlot><ArrowForward /></NavSlot>
        <NavSlot><Reload /></NavSlot>
        <Omnibox>
          <NavSlot $w={16}><Lock /></NavSlot>
          <Url><b>web.kamihq.com</b>/web/viewer.html?source=extension_pdfhandler&amp;extension_handler=extension_open_button&amp;file=https%3A%2F%2Fcorb...</Url>
          <OmniEnd>
            <NavSlot><InstallIcon /></NavSlot>
            <NavSlot><StarIcon /></NavSlot>
          </OmniEnd>
        </Omnibox>
        <NavSlot $w={42}><RecIcon /></NavSlot>
        <NavSlot $w={24}><Puzzle /></NavSlot>
        <ProfilePill><Avatar>J</Avatar>Paused</ProfilePill>
        <NavSlot $w={36}><Kebab /></NavSlot>
      </AddressBar>

      <KamiBar>
        <KamiLogo>Kami</KamiLogo>
        <GreyChip $ml={15} $w={53}>Teacher</GreyChip>
        <TrialChip>Trial Ends In 44 Days</TrialChip>
        <BarSlot $w={32}><PanelIcon /></BarSlot>
        <BarSlot $w={44}><LoupeIcon /></BarSlot>
        <BarSlot $w={16}><GlobeIcon /></BarSlot>
        <FileName>Exact-Trig-1.pdf</FileName>
        <BarRight>
          <GreyChip $w={160}>
            Saving Changes...<ChipDivider /><UndoIcon />Undo
          </GreyChip>
          <BarSlot $w={28} $ml={12}><MinusBar /></BarSlot>
          <BarDivider />
          <BarSlot $w={26}><PlusBar /></BarSlot>
          <ZoomSelect>136%<Updown /></ZoomSelect>
          <BarSlot $w={36}><FolderIcon /></BarSlot>
          <BarSlot $w={32}><ShareIcon /></BarSlot>
          <BarSlot $w={36}><PrintIcon /></BarSlot>
          <BarSlot $w={32}><SaveIcon /></BarSlot>
          <BarSlot $w={44}><DownloadIcon /></BarSlot>
          <BarSlot $w={28}><HelpIcon /><OrangeDot /></BarSlot>
          <BarSlot $w={40}><BarsIcon /></BarSlot>
          <UserBadge>JK</UserBadge>
        </BarRight>
      </KamiBar>

      <Workspace>
        <Sidebar>
          <SideBtn><CursorIcon /></SideBtn>
          <SideBtn><BookIcon /></SideBtn>
          <SideBtn $h={41}><MicBubble /></SideBtn>
          <SideRule />
          <SideBtn $h={41}><HighlightA /></SideBtn>
          <SideBtn $h={38}><CommentIcon /></SideBtn>
          <SideBtn $h={52}><TextTool>T</TextTool></SideBtn>
          <SideBtn $h={45}><DivideIcon /></SideBtn>
          <SideRule />
          <SideBtn><BrushIcon /></SideBtn>
          <SideBtn $h={41}><ShapeIcon /></SideBtn>
          <SideBtn $active $pt={4}><EraserIcon /></SideBtn>
          <SideBtn><ImageFile /></SideBtn>
          <SideBtn><PenNib /></SideBtn>
          <SideRule />
          <SideBtn $pl={16}><Chevrons /></SideBtn>
        </Sidebar>
        <Flyout>
          <FlyoutBtn $active><FlyShape /></FlyoutBtn>
          <FlyoutBtn><FlyFree /></FlyoutBtn>
        </Flyout>
        <Gutter $w={55} $side="right" />
        <Page>
          <Diagram />
          <Question>
            <StrayDot />
            <Prompt>(a)  By using the triangle, show</Prompt>
            <MathVar>sin</MathVar>
            <MathNum>30°</MathNum>
            <MathEq>=</MathEq>
            <Fraction>
              <FractionTop>1</FractionTop>
              <FractionBottom>2</FractionBottom>
            </Fraction>
            <InkUnderline width="34" height="6" viewBox="0 0 34 6">
              <path d="M1 3.500Q16 5 31 2.500" stroke={blueInk} strokeWidth="1.800" fill="none" />
            </InkUnderline>
          </Question>
          <PageRule />
        </Page>
        <Gutter $w={80} $side="left" />
        <Scrollbar>
          <ScrollArrowUp />
          <ScrollThumb />
          <ScrollArrow />
        </Scrollbar>
        <PageBadge>Page<PageInput>2</PageInput>/ 11</PageBadge>
      </Workspace>

      <Taskbar>
        <StartBtn><WinLogo /></StartBtn>
        <SearchBox><SearchGlass /><SearchText>Type here to search</SearchText></SearchBox>
        <TaskSlot><Cortana /></TaskSlot>
        <TaskSlot><TaskView /></TaskSlot>
        <TaskSlot $on><Explorer /></TaskSlot>
        <TaskSlot><Outlook /></TaskSlot>
        <TaskSlot><Excel /></TaskSlot>
        <TaskSlot $on><PowerPoint /></TaskSlot>
        <TaskSlot><WordTask /></TaskSlot>
        <TaskSlot $on><Edge /></TaskSlot>
        <TaskSlot $on $focus><Chrome /></TaskSlot>
        <TaskSlot $on><Zoom /></TaskSlot>
        <TraySlot $w={108} />
        <TraySlot $w={24}><Caret /></TraySlot>
        <TraySlot $w={24}><TrayMic /></TraySlot>
        <TraySlot $w={24}><Battery /></TraySlot>
        <TraySlot $w={28}><WifiTray /></TraySlot>
        <TraySlot $w={18}><Speaker /></TraySlot>
        <TraySlot $w={38}><PenTray /></TraySlot>
        <Clock><span>16:03</span><span>15/03/2021</span></Clock>
        <TraySlot $w={46}><Notify /></TraySlot>
      </Taskbar>
    </Screen>
  );
}
